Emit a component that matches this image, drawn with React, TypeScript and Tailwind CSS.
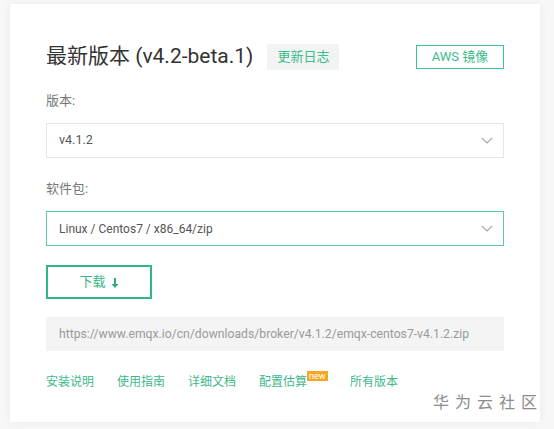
const font = { fontFamily: 'Roboto, "Noto Sans CJK SC", sans-serif' };

const Chevron = () => (
  <svg width="12" height="7" viewBox="0 0 12 7" fill="none">
    <path d="M0.8 0.8 L6 6 L11.2 0.8" stroke="#a3a3a3" strokeWidth="1.2" />
  </svg>
);

const links = ["安装说明", "使用指南", "详细文档"];

export default function App() {
  return (
    <div
      className="relative w-[554px] h-[429px] bg-[#f7f7f7] overflow-hidden pt-[4px] pl-[10px]"
      style={font}
    >
      <div className="w-[530px] h-[418px] bg-white shadow-[0_0_8px_rgba(0,0,0,0.06)] pt-[40px] px-[36px] flex flex-col">
        <div className="h-[25px] flex items-center justify-between">
          <div className="flex items-center">
            <h1 className="text-[21px] leading-[25px] text-[#333] whitespace-nowrap">最新版本 (v4.2-beta.1)</h1>
            <span className="ml-[14px] h-[26px] px-[10px] flex items-center bg-[#f2f4f3] text-[13px] text-[#3dbb8e]">
              更新日志
            </span>
          </div>
          <button className="w-[88px] h-[24px] border border-[#3cc39a] text-[13px] text-[#3dbb8e] flex items-center justify-center">
            AWS 镜像
          </button>
        </div>

        <div className="mt-[22px] text-[13px] leading-[20px] text-[#777]">版本:</div>
        <div className="mt-[12px] h-[35px] border border-[#e6e6e6] flex items-center justify-between pl-[12px] pr-[10px] text-[12.5px] text-[#555]">
          <span>v4.1.2</span>
          <Chevron />
        </div>

        <div className="mt-[21px] text-[13px] leading-[20px] text-[#777]">软件包:</div>
        <div className="mt-[12px] h-[35px] border border-[#5ccaa2] flex items-center justify-between pl-[12px] pr-[10px] text-[12px] text-[#555]">
          <span>Linux / Centos7 / x86_64/zip</span>
          <Chevron />
        </div>

        <button className="mt-[19px] w-[106px] h-[34px] border-2 border-[#2fb884] flex items-center justify-center gap-[5px] text-[13px] text-[#35b784]">
          <span>下载</span>
          <svg width="8" height="10" viewBox="0 0 8 10" className="mt-[2px]">
            <path d="M3 0 H5 V6 H7.5 L4 10 L0.5 6 H3 Z" fill="#2fae7c" />
          </svg>
        </button>

        <div className="mt-[18px] h-[34px] bg-[#f4f4f4] flex items-center pl-[13px] text-[12.2px] text-[#9a9a9a] whitespace-nowrap overflow-hidden">
          https://www.emqx.io/cn/downloads/broker/v4.1.2/emqx-centos7-v4.1.2.zip
        </div>

        <div className="mt-[21px] h-[20px] flex items-center text-[12px] leading-[20px] text-[#3db88b]">
          {links.map((l) => (
            <span key={l} className="mr-[23px]">
              {l}
            </span>
          ))}
          <span className="relative">
            配置估算
            <span className="absolute left-[48px] top-[-1px] h-[10px] px-[2px] bg-[#f5a623] text-white text-[9px] leading-[10px]">
              new
            </span>
          </span>
          <span className="ml-[43px]">所有版本</span>
        </div>
      </div>

      <div className="absolute left-[433px] top-[393px] text-[16px] leading-[20px] tracking-[6px] text-[#8c8c8c]">
        华为云社区
      </div>
    </div>
  );
}
